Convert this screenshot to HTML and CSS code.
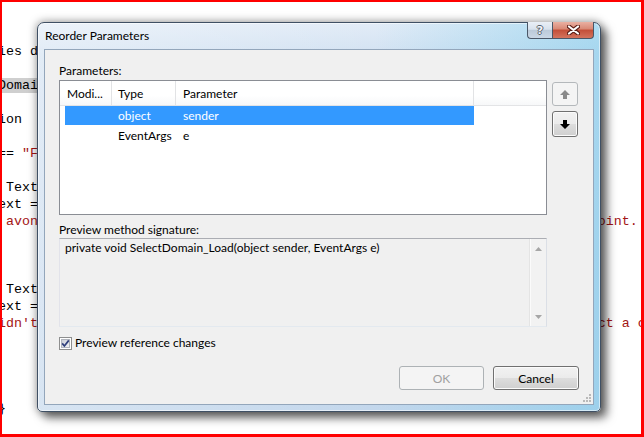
FILE: index.html
```html
<!DOCTYPE html>
<html lang="en">
<head>
<meta charset="utf-8">
<title>Reorder Parameters</title>
<link rel="stylesheet" href="styles.css">
</head>
<body>
<div class="screen">
<pre class="code">


ies domain list

<span class="sel">Domain</span>List.Items.Clear();

ion

== <span class="str">"Favorites"</span>)

 Text.Visible = true;
ext = 
<span class="str"> avonite domain will be used by default as your new applications starting point.</span>



 Text.Visible = true;
ext = 
<span class="str">idn't find the domain you have selected. Please try it again later, or select a choice</span>




}</pre>

  <div class="dialog">
    <div class="titlebar">
      <span class="title">Reorder Parameters</span>
      <div class="caption-btns">
        <span class="cap cap-help">?</span>
        <span class="cap cap-close">
          <svg width="13" height="10" viewBox="0 0 13 10"><path d="M2 1.5 L11 8.5 M11 1.5 L2 8.5" stroke="#5a1d14" stroke-width="4.2" stroke-linecap="round" fill="none"/><path d="M2 1.5 L11 8.5 M11 1.5 L2 8.5" stroke="#ffffff" stroke-width="2.2" stroke-linecap="round" fill="none"/></svg>
        </span>
      </div>
    </div>
    <div class="client">
      <div class="label">Parameters:</div>
      <div class="params-row">
        <div class="listview">
          <div class="lv-header">
            <div class="hcol c1">Modi...</div>
            <div class="hcol c2">Type</div>
            <div class="hcol c3">Parameter</div>
            <div class="hcol c4"></div>
          </div>
          <div class="lv-row selected">
            <span class="cell c1s"></span><span class="cell c2">object</span><span class="cell c3">sender</span>
          </div>
          <div class="lv-row">
            <span class="cell c1s"></span><span class="cell c2">EventArgs</span><span class="cell c3">e</span>
          </div>
        </div>
        <div class="move-btns">
          <span class="mv mv-disabled">
            <svg width="10" height="9" viewBox="0 0 10 9"><path d="M5 0 L10 5 L7 5 L7 9 L3 9 L3 5 L0 5 Z" fill="#8a8a8a"/></svg>
          </span>
          <span class="mv">
            <svg width="10" height="9" viewBox="0 0 10 9"><path d="M3 0 L7 0 L7 4 L10 4 L5 9 L0 4 L3 4 Z" fill="#000000"/></svg>
          </span>
        </div>
      </div>
      <div class="label sig-label">Preview method signature:</div>
      <div class="sig-box">
        <div class="sig-text">private void SelectDomain_Load(object sender, EventArgs e)</div>
        <div class="vscroll">
          <svg width="7" height="4" viewBox="0 0 7 4"><path d="M0 4 L3.5 0 L7 4 Z" fill="#a6a6a6"/></svg>
          <svg width="7" height="4" viewBox="0 0 7 4"><path d="M0 0 L7 0 L3.5 4 Z" fill="#a6a6a6"/></svg>
        </div>
      </div>
      <div class="check-row">
        <span class="checkbox">
          <svg width="13" height="13" viewBox="0 0 13 13">
            <defs><linearGradient id="cbg" x1="0" y1="0" x2="1" y2="1"><stop offset="0" stop-color="#c9cdd6"/><stop offset="1" stop-color="#f3f4f6"/></linearGradient></defs>
            <rect x="0.5" y="0.5" width="12" height="12" fill="#ffffff" stroke="#8e8f8f"/>
            <rect x="2.5" y="2.5" width="8" height="8" fill="url(#cbg)" stroke="#b1b5bd"/>
            <path d="M3.2 6.4 L5.4 9 L9.8 3.4" fill="none" stroke="#2f3f7c" stroke-width="1.7"/>
          </svg>
        </span>
        <span class="check-text">Preview reference changes</span>
      </div>
      <div class="btn-row">
        <span class="btn btn-disabled">OK</span>
        <span class="btn">Cancel</span>
      </div>
      <svg class="grip" width="9" height="9" viewBox="0 0 9 9">
        <rect x="6" y="0" width="2" height="2" fill="#b9b9b9"/>
        <rect x="3" y="3" width="2" height="2" fill="#b9b9b9"/>
        <rect x="6" y="3" width="2" height="2" fill="#b9b9b9"/>
        <rect x="0" y="6" width="2" height="2" fill="#b9b9b9"/>
        <rect x="3" y="6" width="2" height="2" fill="#b9b9b9"/>
        <rect x="6" y="6" width="2" height="2" fill="#b9b9b9"/>
      </svg>
    </div>
  </div>
  <div class="red-frame"></div>
</div>
</body>
</html>
```

FILE: styles.css
```css
* { box-sizing: border-box; }

html, body {
  margin: 0;
  padding: 0;
  background: #ffffff;
}

.screen {
  position: relative;
  width: 644px;
  height: 437px;
  overflow: hidden;
  background: #ffffff;
}

.code {
  margin: 0 0 0 -2px;
  padding: 9px 0 0 0;
  font-family: "Liberation Mono", "Courier New", monospace;
  font-size: 13.333px;
  line-height: 17px;
  color: #000000;
  white-space: pre;
}

.str { color: #a31515; }
.sel { background: #cfcfcf; }

.red-frame {
  position: absolute;
  left: 0;
  top: 0;
  width: 644px;
  height: 437px;
  border-style: solid;
  border-color: #ff0000;
  border-width: 2px 3px 3px 2px;
  pointer-events: none;
}

/* ---------- dialog window ---------- */
.dialog {
  position: absolute;
  left: 37px;
  top: 22px;
  width: 564px;
  height: 390px;
  border: 1px solid #3f5064;
  border-radius: 7px 7px 5px 5px;
  background:
    linear-gradient(to right, rgba(255,255,255,0.35), rgba(255,255,255,0) 60%, rgba(110,200,235,0.45)),
    linear-gradient(180deg, #e2ecf7 0%, #d3e2f2 8%, #c3d7ec 100%);
  box-shadow:
    inset 0 0 0 1px rgba(255,255,255,0.55),
    0 0 9px 1px rgba(0,0,0,0.35),
    6px 6px 10px rgba(0,0,0,0.55);
  display: flex;
  flex-direction: column;
  font-family: "Lato", "Liberation Sans", sans-serif;
  font-size: 12px;
  line-height: 15px;
  color: #000000;
}

.titlebar {
  height: 26px;
  display: flex;
  justify-content: space-between;
  align-items: flex-start;
  padding-left: 7px;
}

.title {
  padding-top: 5px;
  color: #000000;
}

.caption-btns {
  display: flex;
  margin-top: -1px;
  margin-right: 6px;
}

.cap {
  height: 17px;
  display: flex;
  align-items: center;
  justify-content: center;
  border: 1px solid #4a5767;
  border-top: none;
}

.cap-help {
  width: 25px;
  border-right: none;
  border-radius: 0 0 0 4px;
  background: linear-gradient(180deg, #e9eff6 0%, #d8e2ed 45%, #bccad9 52%, #cad7e5 100%);
  font-family: "DejaVu Sans", sans-serif;
  font-weight: bold;
  font-size: 11px;
  color: #f4f6f8;
  text-shadow: 1px 0 0 #59636f, -1px 0 0 #59636f, 0 1px 0 #59636f, 0 -1px 0 #59636f;
  line-height: 15px;
}

.cap-close {
  width: 42px;
  border-radius: 0 0 4px 0;
  background: linear-gradient(180deg, #eab0a2 0%, #d98a77 42%, #c4503a 52%, #d3735d 100%);
}

.client {
  flex: 1;
  margin: 0 6px 6px 6px;
  border: 1px solid #93a6bb;
  background: #f0f0f0;
  padding: 13px 14px 0 14px;
  display: flex;
  flex-direction: column;
  position: relative;
}

.label { height: 15px; }

.params-row {
  margin-top: 2px;
  display: flex;
  gap: 5px;
}

/* ---------- list view ---------- */
.listview {
  width: 488px;
  height: 135px;
  border: 1px solid #8a8d94;
  background: #ffffff;
}

.lv-header {
  display: flex;
  height: 25px;
  border-bottom: 1px solid #e3e4e6;
  background: linear-gradient(180deg, #ffffff 0%, #ffffff 60%, #f7f8f9 100%);
}

.hcol {
  height: 24px;
  padding: 5px 0 0 6px;
  border-right: 1px solid #e2e3e5;
  white-space: nowrap;
}

.hcol.c1 { width: 52px; padding-left: 7px; }
.hcol.c2 { width: 64px; }
.hcol.c3 { width: 298px; padding-left: 7px; }
.hcol.c4 { flex: 1; border-right: none; }

.lv-row {
  display: flex;
  height: 19px;
  margin-left: 5px;
  width: 409px;
  padding-top: 2px;
}

.lv-row.selected {
  background: #3399ff;
  color: #ffffff;
}

.lv-row + .lv-row { padding-top: 3px; }

.cell { white-space: nowrap; }
.cell.c1s { width: 47px; }
.cell.c2 { width: 64px; padding-left: 6px; }
.cell.c3 { width: 298px; padding-left: 7px; }

/* ---------- move buttons ---------- */
.move-btns {
  display: flex;
  flex-direction: column;
  gap: 5px;
  padding-top: 2px;
}

.mv {
  width: 26px;
  height: 24px;
  border: 1px solid #707070;
  border-radius: 3px;
  background: linear-gradient(180deg, #f2f2f2 0%, #ebebeb 48%, #dddddd 52%, #cfcfcf 100%);
  box-shadow: inset 0 0 0 1px #fbfbfb;
  display: flex;
  align-items: center;
  justify-content: center;
}

.mv + .mv { height: 26px; }

.mv-disabled {
  border-color: #b4b8bb;
  background: #f4f4f4;
  box-shadow: none;
}

/* ---------- signature ---------- */
.sig-label { margin-top: 7px; }

.sig-box {
  margin-top: 1px;
  width: 488px;
  height: 89px;
  border-style: solid;
  border-width: 1px;
  border-color: #abadb3 #dbdfe6 #e3e9ef #e2e3ea;
  background: #f0f0f0;
  display: flex;
  justify-content: space-between;
}

.sig-text {
  padding: 1px 0 0 5px;
  white-space: nowrap;
}

.vscroll {
  width: 17px;
  border-left: 1px solid #e4e4e4;
  box-shadow: inset 1px 0 0 #fbfbfb;
  background: #f2f2f2;
  display: flex;
  flex-direction: column;
  justify-content: space-between;
  align-items: center;
  padding: 8px 0 7px 0;
}

/* ---------- checkbox ---------- */
.check-row {
  margin-top: 8px;
  height: 15px;
  display: flex;
  align-items: flex-start;
  gap: 3px;
}

.checkbox {
  width: 13px;
  height: 13px;
  margin-top: 2px;
  display: block;
}

.checkbox svg { display: block; }

/* ---------- buttons ---------- */
.btn-row {
  margin-top: 16px;
  display: flex;
  justify-content: flex-end;
  gap: 9px;
}

.btn {
  width: 86px;
  height: 24px;
  border: 1px solid #707070;
  border-radius: 3px;
  background: linear-gradient(180deg, #f2f2f2 0%, #ebebeb 48%, #dddddd 52%, #cfcfcf 100%);
  box-shadow: inset 0 0 0 1px #fbfbfb;
  display: flex;
  align-items: center;
  justify-content: center;
}

.btn-disabled {
  width: 85px;
  border-color: #adb2b5;
  background: #f4f4f4;
  box-shadow: none;
  color: #a0a0a0;
}

.grip {
  position: absolute;
  right: 1px;
  bottom: 1px;
}
```
